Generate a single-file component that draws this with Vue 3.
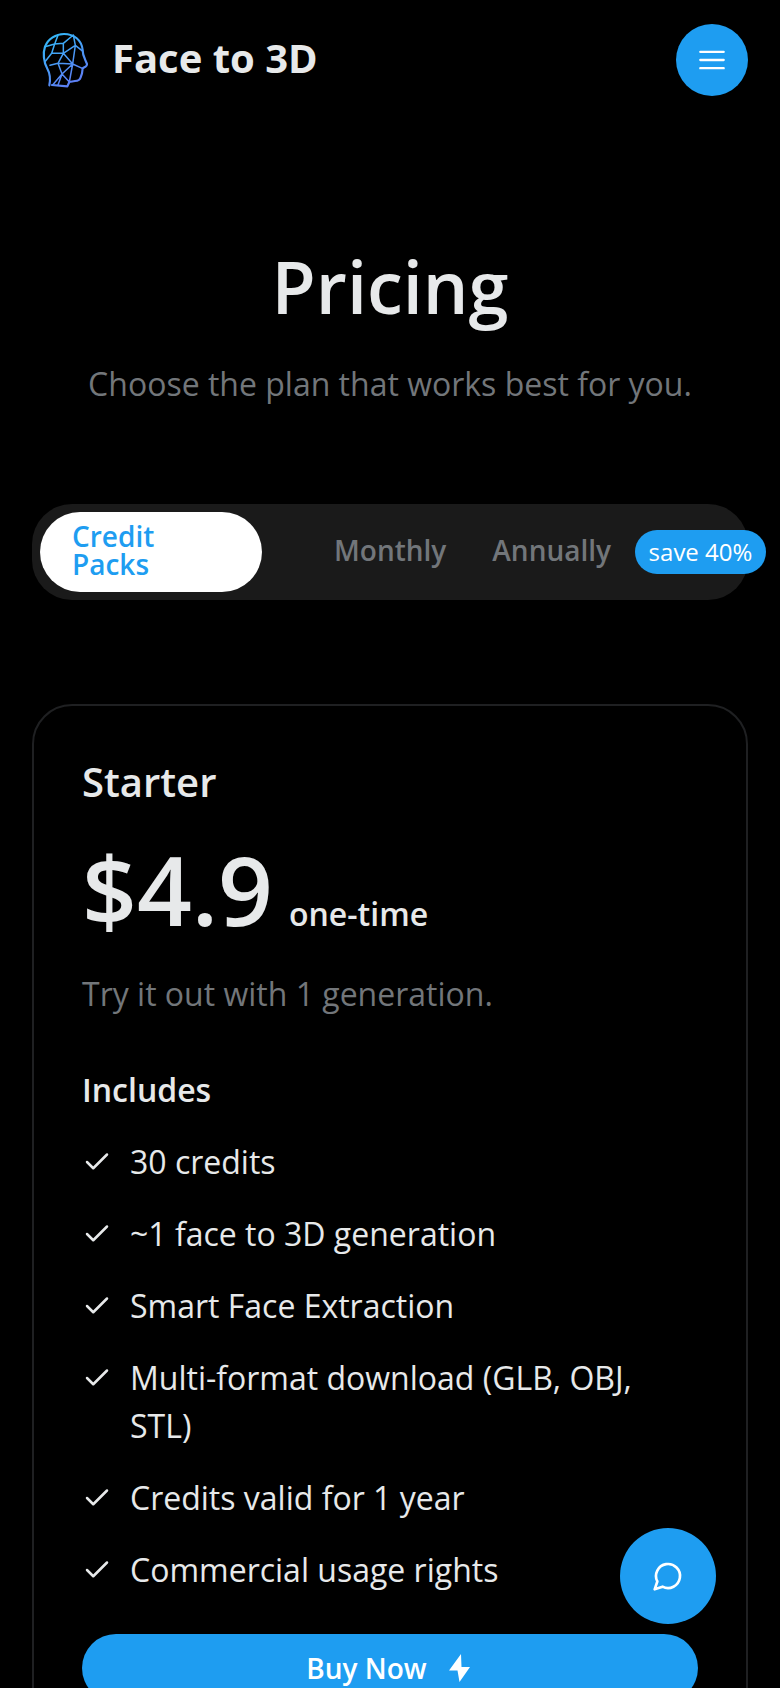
<template>
  <div class="page">
    <header class="header">
      <div class="brand">
        <svg class="logo" viewBox="0 0 210 240" fill="none">
          <defs>
            <linearGradient id="headGrad" x1="0" y1="0" x2="0.5" y2="1">
              <stop offset="0" stop-color="#30bdf8" />
              <stop offset="1" stop-color="#5c80f4" />
            </linearGradient>
          </defs>
          <g stroke="url(#headGrad)" stroke-linejoin="round" stroke-linecap="round">
            <path stroke-width="6.5" d="M58 196C62 176 60 160 52 146C40 125 39 98 45 80C54 56 78 42 102 42C132 42 155 60 158 90C158 100 160 108 165 118L171 132C172 140 162 142 158 145L156 160L152 172C150 180 145 183 135 183L118 186L112 199L66 195" />
            <path stroke-width="4.5" d="M84 46L74 72L45 80M74 72L65 100L45 125M74 72L100 70L130 45M100 70L100 100L65 100M100 100L136 76L130 45M136 76L156 92M136 76L128 132L100 100M100 100L84 130L60 136M84 130L128 132L157 145M128 132L118 186M84 130L96 162L68 195M96 162L118 186M96 162L128 132M96 162L84 195" />
          </g>
        </svg>
        <span class="brand-name">Face to 3D</span>
      </div>
      <button class="menu-btn" aria-label="Menu">
        <svg width="28" height="28" viewBox="0 0 24 24" fill="none" stroke="#fff" stroke-width="2" stroke-linecap="round">
          <path d="M2 5h20M2 12h20M2 19h20" />
        </svg>
      </button>
    </header>

    <section class="intro">
      <h1>Pricing</h1>
      <p>Choose the plan that works best for you.</p>
    </section>

    <div class="tabs">
      <button class="tab active"><span class="tab-label">Credit<br />Packs</span></button>
      <button class="tab monthly"><span class="tab-label">Monthly</span></button>
      <button class="tab annually"><span class="tab-label">Annually</span></button>
      <span class="save">save 40%</span>
    </div>

    <article class="card">
      <h2>Starter</h2>
      <div class="price">
        <span class="amount">$4.9</span>
        <span class="unit">one-time</span>
      </div>
      <p class="blurb">Try it out with 1 generation.</p>
      <h3>Includes</h3>
      <ul class="features">
        <li v-for="f in features" :key="f">
          <svg class="check" viewBox="0 0 24 24" fill="none" stroke="#e7e9ea" stroke-width="2" stroke-linecap="round" stroke-linejoin="round">
            <path d="M20 6L9 17l-5-5" />
          </svg>
          <span>{{ f }}</span>
        </li>
      </ul>
      <button class="buy">
        Buy Now
        <svg class="zap" viewBox="0 0 21 28" fill="#fff">
          <path d="M12 0L0 16.5H8.5L10.5 28L21 13H12.5Z" />
        </svg>
      </button>
    </article>

    <button class="chat" aria-label="Chat">
      <svg width="32" height="32" viewBox="0 0 24 24" fill="none" stroke="#fff" stroke-width="2" stroke-linecap="round" stroke-linejoin="round">
        <path d="M7.9 20A9 9 0 1 0 4 16.1L2 22Z" />
      </svg>
    </button>
  </div>
</template>

<script setup>
const features = [
  '30 credits',
  '~1 face to 3D generation',
  'Smart Face Extraction',
  'Multi-format download (GLB, OBJ, STL)',
  'Credits valid for 1 year',
  'Commercial usage rights',
]
</script>

<style>
html, body { background: #000; }
</style>

<style scoped>
.page {
  position: relative;
  height: 1688px;
  overflow: hidden;
  background: #000;
  color: #e7e9ea;
  font-family: "Open Sans", sans-serif;
}
button {
  font-family: inherit;
  border: none;
  cursor: pointer;
  padding: 0;
}
.header {
  display: flex;
  align-items: center;
  justify-content: space-between;
  padding: 20px 32px 0 30px;
}
.brand { display: flex; align-items: center; gap: 12px; }
.logo { width: 70px; height: 80px; }
.brand-name { font-size: 40px; line-height: 54px; font-weight: 700; margin-top: -4px; }
.menu-btn {
  width: 72px;
  height: 72px;
  border-radius: 50%;
  background: #1e9df1;
  display: flex;
  align-items: center;
  justify-content: center;
}
.intro { text-align: center; margin-top: 146px; }
h1 {
  margin: 0;
  font-size: 72px;
  line-height: 80px;
  font-weight: 600;
}
.intro p {
  margin: 34px 0 0;
  font-size: 32px;
  line-height: 48px;
  color: #72767a;
}
.tabs {
  position: relative;
  display: flex;
  align-items: center;
  height: 96px;
  margin: 96px 32px 0;
  padding: 8px;
  box-sizing: border-box;
  background: #1a1a1a;
  border-radius: 40px;
}
.tab {
  background: none;
  font-size: 28px;
  line-height: 28px;
  font-weight: 600;
  color: #72767a;
}
.tab-label { display: block; margin-top: -4px; }
.tab.active {
  width: 222px;
  height: 80px;
  border-radius: 40px;
  background: #fff;
  color: #1e9df1;
  text-align: left;
  padding-left: 32px;
}
.monthly { margin-left: 72px; }
.annually { margin-left: 46px; }
.save {
  position: absolute;
  left: 603px;
  top: 26px;
  width: 131px;
  height: 44px;
  border-radius: 22px;
  background: #1e9df1;
  color: #fff;
  font-size: 24px;
  line-height: 44px;
  text-align: center;
}
.card {
  margin: 104px 32px 0;
  padding: 48px;
  border: 2px solid #1f2022;
  border-radius: 40px;
}
h2 {
  margin: 0;
  font-size: 40px;
  line-height: 56px;
  font-weight: 600;
}
.price { display: flex; align-items: baseline; gap: 16px; margin-top: 23px; }
.amount { font-size: 96px; line-height: 112px; font-weight: 600; }
.unit { font-size: 32px; font-weight: 600; }
.blurb {
  margin: 25px 0 0;
  font-size: 32px;
  line-height: 48px;
  color: #72767a;
}
h3 {
  margin: 52px 0 0;
  font-size: 32px;
  line-height: 40px;
  font-weight: 600;
}
.features { list-style: none; margin: 28px 0 0; padding: 0; }
.features li {
  display: flex;
  gap: 18px;
  font-size: 32px;
  line-height: 48px;
  margin-bottom: 24px;
}
.check { width: 30px; height: 30px; flex: none; margin-top: 9px; }
.buy {
  display: flex;
  align-items: center;
  justify-content: center;
  gap: 22px;
  width: 100%;
  height: 68px;
  margin-top: 40px;
  padding-right: 4px;
  border-radius: 36px;
  background: #1e9df1;
  color: #fff;
  font-size: 28px;
  font-weight: 600;
}
.zap { width: 21px; height: 28px; }
.chat {
  position: fixed;
  right: 64px;
  bottom: 64px;
  width: 96px;
  height: 96px;
  border-radius: 50%;
  background: #1e9df1;
  display: flex;
  align-items: center;
  justify-content: center;
}
</style>
